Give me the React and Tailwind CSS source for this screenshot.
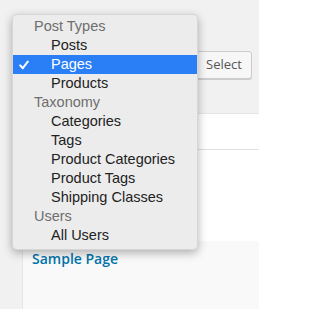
import React from "react";

const groups = [
  { title: "Post Types", items: ["Posts", "Pages", "Products"] },
  { title: "Taxonomy", items: ["Categories", "Tags", "Product Categories", "Product Tags", "Shipping Classes"] },
  { title: "Users", items: ["All Users"] },
];

function Check() {
  return (
    <svg width="10" height="10" viewBox="0 0 10 10" className="block">
      <path d="M1.2 5.4 L3.8 8.2 L8.8 1.6" fill="none" stroke="white" strokeWidth="2" strokeLinecap="round" strokeLinejoin="round" />
    </svg>
  );
}

export default function App() {
  return (
    <div className="relative w-[259px] h-[309px] overflow-hidden bg-[#f1f1f1] flex">
      <div className="w-[22px] shrink-0 bg-[#f1f1f1]" />
      <div className="flex-1 flex flex-col">
        <div className="h-[114px] bg-[#f1f1f1] border-b border-[#e5e5e5] flex items-start justify-end pr-[7px] pt-[51px]">
          <button className="h-[28px] w-[56px] rounded-[3px] border border-[#cccccc] bg-[#f7f7f7] shadow-[0_1px_0_#cccccc] text-[13px] text-[#555] [font-family:'Open_Sans',sans-serif] flex items-center justify-center pb-[1px]">
            Select
          </button>
        </div>
        <div className="h-[36px] bg-white border-b border-[#e1e1e1]" />
        <div className="h-[91px] bg-white" />
        <div className="flex-1 bg-[#f9f9f9] border-l border-[#e5e5e5] pl-[9px] pt-[8px]">
          <div className="text-[14px] font-semibold text-[#0073aa] [font-family:'Open_Sans',sans-serif] leading-[19px]">
            Sample Page
          </div>
        </div>
      </div>

      <div className="absolute left-[12px] top-[14px] w-[186px] h-[236px] rounded-[5px] bg-[#ececec] border border-[#c8c8c8]/60 shadow-[0_3px_10px_rgba(0,0,0,0.3)] pt-[2px] [font-family:'Liberation_Sans',Arial,sans-serif] text-[14.5px]">
        {groups.map((g) => (
          <div key={g.title}>
            <div className="h-[19px] leading-[19px] pl-[21px] text-[#6e6e6e]">{g.title}</div>
            {g.items.map((it) => {
              const sel = it === "Pages";
              return (
                <div
                  key={it}
                  className={
                    sel
                      ? "h-[19px] leading-[19px] pl-[38px] bg-[#2a7ff7] text-white relative"
                      : "h-[19px] leading-[19px] pl-[38px] text-[#222]"
                  }
                >
                  {sel && (
                    <span className="absolute left-[6px] top-[5px]">
                      <Check />
                    </span>
                  )}
                  {it}
                </div>
              );
            })}
          </div>
        ))}
      </div>
    </div>
  );
}
